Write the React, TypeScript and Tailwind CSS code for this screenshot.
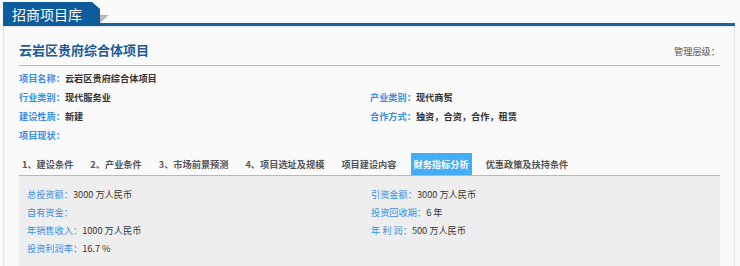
import React from "react";

const font = { fontFamily: '"Noto Sans CJK SC", "Noto Sans", sans-serif' };

function InfoRow({ label, value }: { label: string; value: string }) {
  return (
    <div className="h-[19px] leading-[19px] whitespace-nowrap">
      <span className="text-[#3a8fe4]">{label}</span>
      <span className="text-[#333]">{value}</span>
    </div>
  );
}

function FinRow({ label, value }: { label: string; value: string }) {
  return (
    <div className="h-[18px] leading-[18px] whitespace-nowrap">
      <span className="text-[#3a8fe4]">{label}</span>
      <span className="text-[#333]">{value}</span>
    </div>
  );
}

const tabs = [
  "1、建设条件",
  "2、产业条件",
  "3、市场前景预测",
  "4、项目选址及规模",
  "项目建设内容",
  "财务指标分析",
  "优惠政策及扶持条件",
];

export default function App() {
  return (
    <div className="w-[740px] h-[266px] overflow-hidden bg-[#fafafa]" style={font}>
      {/* header */}
      <div className="flex items-end h-[26px]">
        <div className="ml-[3px] w-[97px] h-[24px] bg-[#0f5c9c] text-white text-[14px] leading-[24px] pl-[9px] [clip-path:polygon(0_0,89px_0,100%_7px,100%_100%,0_100%)]">
          招商项目库
        </div>
        <div className="relative flex-1 h-[3px] bg-[#16649f] mr-[5px]">
          <div className="absolute left-0 bottom-[3px] w-0 h-0 border-t-[8px] border-t-[#9a9a9a] border-r-[9px] border-r-transparent opacity-70" />
        </div>
      </div>
      <div className="h-px bg-[#e2e2e2] mx-[3px] w-[732px]" />

      {/* body */}
      <div className="ml-[3px] w-[732px] h-[240px] border-x border-[#e2e2e2] pl-[15px] pr-[14px] text-[9.2px]">
        <div className="flex justify-between items-center pt-[14px] pb-[6px] border-b border-[#8ec3ee]">
          <div className="text-[13px] leading-[16px] font-bold text-[#1d5b99]">云岩区贵府综合体项目</div>
          <div className="text-[#555] leading-[16px] pt-[2px]">管理层级：</div>
        </div>

        <div className="grid grid-cols-[351px_1fr] mt-[3px] font-bold">
          <InfoRow label="项目名称：" value="云岩区贵府综合体项目" />
          <div />
          <InfoRow label="行业类别：" value="现代服务业" />
          <InfoRow label="产业类别：" value="现代商贸" />
          <InfoRow label="建设性质：" value="新建" />
          <InfoRow label="合作方式：" value="独资，合资，合作，租赁" />
          <InfoRow label="项目现状：" value="" />
          <div />
        </div>

        <div className="mt-[8px] flex gap-[11px] border-b border-[#8ec3ee] h-[23px]">
          {tabs.map((t) => (
            <div
              key={t}
              className={
                t === "财务指标分析"
                  ? "px-[3px] h-[22px] leading-[22px] bg-[#43aef5] text-white font-bold whitespace-nowrap"
                  : "px-[3px] h-[22px] leading-[22px] text-[#555] font-bold whitespace-nowrap"
              }
            >
              {t}
            </div>
          ))}
        </div>

        <div className="bg-[#eeeeee] pl-[8px] pt-[9px] pb-[30px] grid grid-cols-[344px_1fr]">
          <FinRow label="总投资额：" value="3000 万人民币" />
          <FinRow label="引资金额：" value="3000 万人民币" />
          <FinRow label="自有资金：" value="" />
          <FinRow label="投资回收期：" value="6 年" />
          <FinRow label="年销售收入：" value="1000 万人民币" />
          <FinRow label="年 利 润：" value="500 万人民币" />
          <FinRow label="投资利润率：" value="16.7 %" />
          <div />
        </div>
      </div>
    </div>
  );
}
